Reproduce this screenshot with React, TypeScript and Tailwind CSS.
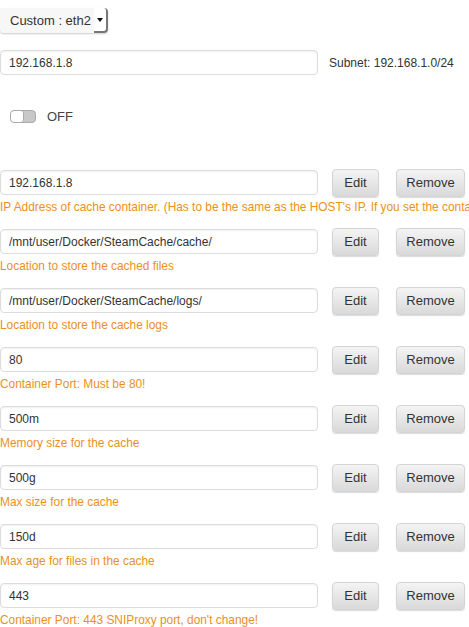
import React from 'react';

const rows = [
  { value: '192.168.1.8', help: "IP Address of cache container. (Has to be the same as the HOST's IP. If you set the container to bridge mode, all ports must be mapped)" },
  { value: '/mnt/user/Docker/SteamCache/cache/', help: 'Location to store the cached files' },
  { value: '/mnt/user/Docker/SteamCache/logs/', help: 'Location to store the cache logs' },
  { value: '80', help: 'Container Port: Must be 80!' },
  { value: '500m', help: 'Memory size for the cache' },
  { value: '500g', help: 'Max size for the cache' },
  { value: '150d', help: 'Max age for files in the cache' },
  { value: '443', help: "Container Port: 443 SNIProxy port, don't change!" },
];

const btn =
  'h-[28px] rounded-[4px] border border-[#d4d4d4] bg-gradient-to-b from-[#f4f4f4] to-[#d9d9d9] text-[13px] text-[#333] shadow-[0_1px_1px_rgba(0,0,0,0.15)]';

const inputCls =
  'h-[25px] w-[318px] rounded-[4px] border border-[#dcdcdc] bg-white px-[8px] text-[12px] text-[#333] shadow-[inset_0_1px_2px_rgba(0,0,0,0.06)] outline-none';

const App: React.FC = () => {
  return (
    <div className="w-[469px] h-[627px] overflow-hidden bg-white text-[#333] font-['Liberation_Sans',Arial,sans-serif]">
      {/* network select */}
      <div className="pt-[8px]">
        <div className="flex h-[25px] w-[108px] rounded-[4px] bg-[#f7f7f7] shadow-[0_1px_2px_rgba(0,0,0,0.2)]">
          <span className="flex-1 pl-[10px] text-[13px] leading-[25px] text-[#333]">Custom : eth2</span>
          <span className="flex w-[14px] items-center justify-center rounded-r-[4px] border-r-2 border-b-2 border-[#777] bg-white">
            <span className="h-0 w-0 border-x-[3px] border-t-[4px] border-x-transparent border-t-[#111]" />
          </span>
        </div>
      </div>

      {/* ip + subnet */}
      <div className="mt-[17px] flex items-center">
        <input className={inputCls} defaultValue="192.168.1.8" />
        <span className="ml-[11px] text-[12px] text-[#333]">Subnet: 192.168.1.0/24</span>
      </div>

      {/* toggle */}
      <div className="mt-[32px] flex items-center pl-[10px]">
        <div className="flex h-[13px] w-[26px] overflow-hidden rounded-[4px] border border-[#aaa] bg-[#c8c8c8]">
          <div className="h-full w-[13px] rounded-[3px] border-r border-[#aaa] bg-white" />
        </div>
        <span className="ml-[11px] text-[13px] text-[#444]">OFF</span>
      </div>

      {/* config rows */}
      <div className="mt-[42px] flex flex-col">
        {rows.map((row, i) => (
          <div key={i} className="h-[59px]">
            <div className="flex items-center">
              <input className={inputCls} defaultValue={row.value} />
              <button className={`${btn} ml-[14px] w-[47px]`}>Edit</button>
              <button className={`${btn} ml-[17px] w-[69px]`}>Remove</button>
            </div>
            <div className="mt-[3px] whitespace-nowrap text-[11.9px] leading-[14px] text-[#ec8f1c]">{row.help}</div>
          </div>
        ))}
      </div>
    </div>
  );
};

export default App;
